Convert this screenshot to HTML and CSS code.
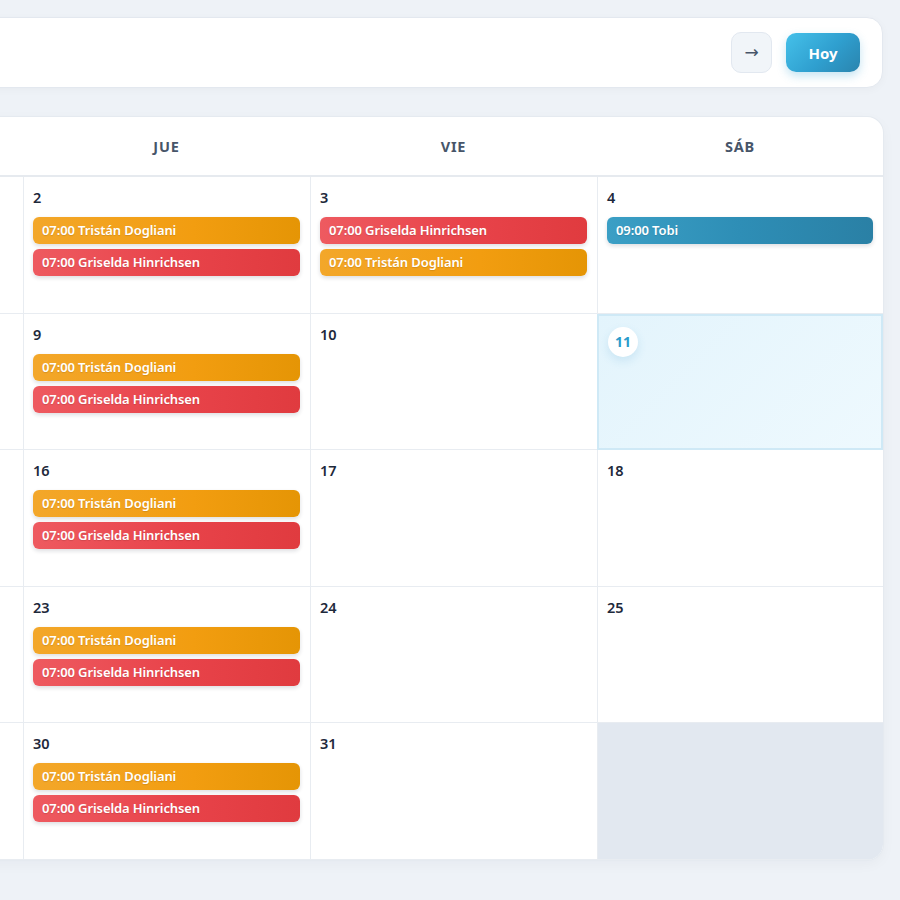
FILE: index.html
```html
<!DOCTYPE html>
<html lang="es">
<head>
<meta charset="utf-8">
<title>Calendario</title>
<link rel="stylesheet" href="styles.css">
</head>
<body>
<div class="page">
  <header class="topbar">
    <div class="title-group">
      <button class="nav-btn">←</button>
      <h1 class="month">Octubre 2025</h1>
    </div>
    <div class="actions">
      <button class="nav-btn">→</button>
      <button class="today-btn">Hoy</button>
    </div>
  </header>

  <section class="calendar">
    <div class="head">
      <div class="dow">DOM</div>
      <div class="dow">LUN</div>
      <div class="dow">MAR</div>
      <div class="dow">MIÉ</div>
      <div class="dow">JUE</div>
      <div class="dow">VIE</div>
      <div class="dow">SÁB</div>
    </div>
    <div class="grid">
      <!-- week 1 -->
      <div class="cell first other"></div>
      <div class="cell other"></div>
      <div class="cell other"></div>
      <div class="cell"><span class="num">1</span></div>
      <div class="cell"><span class="num">2</span>
        <div class="ev orange">07:00 Tristán Dogliani</div>
        <div class="ev red">07:00 Griselda Hinrichsen</div>
      </div>
      <div class="cell"><span class="num">3</span>
        <div class="ev red">07:00 Griselda Hinrichsen</div>
        <div class="ev orange">07:00 Tristán Dogliani</div>
      </div>
      <div class="cell"><span class="num">4</span>
        <div class="ev blue">09:00 Tobi</div>
      </div>
      <!-- week 2 -->
      <div class="cell first"><span class="num">5</span></div>
      <div class="cell"><span class="num">6</span></div>
      <div class="cell"><span class="num">7</span></div>
      <div class="cell"><span class="num">8</span></div>
      <div class="cell"><span class="num">9</span>
        <div class="ev orange">07:00 Tristán Dogliani</div>
        <div class="ev red">07:00 Griselda Hinrichsen</div>
      </div>
      <div class="cell"><span class="num">10</span></div>
      <div class="cell today"><span class="num today-num">11</span></div>
      <!-- week 3 -->
      <div class="cell first"><span class="num">12</span></div>
      <div class="cell"><span class="num">13</span></div>
      <div class="cell"><span class="num">14</span></div>
      <div class="cell"><span class="num">15</span></div>
      <div class="cell"><span class="num">16</span>
        <div class="ev orange">07:00 Tristán Dogliani</div>
        <div class="ev red">07:00 Griselda Hinrichsen</div>
      </div>
      <div class="cell"><span class="num">17</span></div>
      <div class="cell"><span class="num">18</span></div>
      <!-- week 4 -->
      <div class="cell first"><span class="num">19</span></div>
      <div class="cell"><span class="num">20</span></div>
      <div class="cell"><span class="num">21</span></div>
      <div class="cell"><span class="num">22</span></div>
      <div class="cell"><span class="num">23</span>
        <div class="ev orange">07:00 Tristán Dogliani</div>
        <div class="ev red">07:00 Griselda Hinrichsen</div>
      </div>
      <div class="cell"><span class="num">24</span></div>
      <div class="cell"><span class="num">25</span></div>
      <!-- week 5 -->
      <div class="cell first"><span class="num">26</span></div>
      <div class="cell"><span class="num">27</span></div>
      <div class="cell"><span class="num">28</span></div>
      <div class="cell"><span class="num">29</span></div>
      <div class="cell"><span class="num">30</span>
        <div class="ev orange">07:00 Tristán Dogliani</div>
        <div class="ev red">07:00 Griselda Hinrichsen</div>
      </div>
      <div class="cell"><span class="num">31</span></div>
      <div class="cell other"></div>
    </div>
  </section>
</div>
</body>
</html>
```

FILE: styles.css
```css
html, body {
  margin: 0;
  padding: 0;
}

body {
  background: #eef2f7;
  font-family: "Noto Sans", "Open Sans", "DejaVu Sans", sans-serif;
  color: #1e293b;
  overflow: hidden;
  width: 900px;
  height: 900px;
}

.page {
  display: flex;
  flex-direction: column;
  align-items: flex-end;
  gap: 29px;
  padding: 17px 17px 0 0;
  width: 900px;
  box-sizing: border-box;
}

.topbar {
  flex-shrink: 0;
  width: 2009px;
  height: 71px;
  box-sizing: border-box;
  background: #ffffff;
  border: 1px solid #e3e8ef;
  border-radius: 16px;
  box-shadow: 0 2px 8px rgba(15, 23, 42, 0.03);
  display: flex;
  align-items: center;
  justify-content: space-between;
  padding: 0 22px 0 24px;
}

.title-group {
  display: flex;
  align-items: center;
  gap: 14px;
}

.month {
  margin: 0;
  font-size: 22px;
  font-weight: 700;
  color: #1e293b;
}

.actions {
  display: flex;
  align-items: center;
  gap: 14px;
}

.nav-btn {
  width: 41px;
  height: 41px;
  box-sizing: border-box;
  border: 1px solid #e2e8f0;
  border-radius: 10px;
  background: #f1f5f9;
  color: #475569;
  font-family: "DejaVu Sans", sans-serif;
  font-size: 17px;
  line-height: 1;
  padding: 0;
  display: flex;
  align-items: center;
  justify-content: center;
}

.today-btn {
  width: 74px;
  height: 39px;
  border: none;
  border-radius: 10px;
  background: linear-gradient(135deg, #45c1ea 0%, #2f9fcf 55%, #2a84ae 100%);
  color: #ffffff;
  font-family: "Noto Sans", sans-serif;
  font-size: 15px;
  font-weight: 700;
  box-shadow: 0 4px 10px rgba(47, 159, 207, 0.28);
  padding: 0;
}

.calendar {
  flex-shrink: 0;
  width: 2008px;
  background: #ffffff;
  border-radius: 16px;
  overflow: hidden;
  box-shadow: 0 0 0 1px #e5eaf0, 0 4px 14px rgba(15, 23, 42, 0.04);
}

.head {
  display: grid;
  grid-template-columns: repeat(6, 287px) 286px;
  height: 60px;
  box-sizing: border-box;
  border-bottom: 2px solid #e6eaef;
}

.dow {
  display: flex;
  align-items: center;
  justify-content: center;
  font-size: 14.5px;
  font-weight: 700;
  letter-spacing: 0.8px;
  color: #475569;
}

.grid {
  display: grid;
  grid-template-columns: repeat(6, 287px) 286px;
  grid-template-rows: repeat(5, 1fr);
  height: 683px;
}

.cell {
  box-sizing: border-box;
  border-left: 1px solid #e8ecf1;
  border-bottom: 1px solid #e8ecf1;
  padding: 10px 10px 10px 9px;
  display: flex;
  flex-direction: column;
  gap: 5px;
  min-width: 0;
}

.cell.first {
  border-left: none;
}

.cell.other {
  background: #e2e8f0;
}

.cell.today {
  border: 2px solid #cfe9f6;
  background: linear-gradient(135deg, #e3f4fc 0%, #eef9fe 100%);
  padding: 10px 10px 10px 9px;
}

.num {
  font-size: 14.5px;
  font-weight: 600;
  line-height: 20px;
  height: 20px;
  color: #1e293b;
  margin-bottom: 5px;
}

.today-num {
  width: 30px;
  height: 30px;
  line-height: 30px;
  border-radius: 50%;
  background: #ffffff;
  text-align: center;
  color: #2b9bcb;
  font-weight: 700;
  font-size: 14px;
  margin-top: 1px;
  box-shadow: 0 4px 10px rgba(56, 150, 200, 0.16);
}

.ev {
  height: 27px;
  line-height: 27px;
  border-radius: 6px;
  padding: 0 9px;
  color: #ffffff;
  font-size: 13px;
  font-weight: 600;
  white-space: nowrap;
  overflow: hidden;
  letter-spacing: -0.1px;
  text-shadow: 0 1px 1px rgba(0, 0, 0, 0.12);
  box-shadow: 0 2px 4px rgba(15, 23, 42, 0.14);
}

.ev.orange {
  background: linear-gradient(90deg, #f3a72a 0%, #f29d10 60%, #e59505 100%);
}

.ev.red {
  background: linear-gradient(90deg, #ee5a60 0%, #e8434a 55%, #e03b3f 100%);
}

.ev.blue {
  background: linear-gradient(90deg, #3b9fc5 0%, #2e8eb6 50%, #2a80a5 100%);
}
```
